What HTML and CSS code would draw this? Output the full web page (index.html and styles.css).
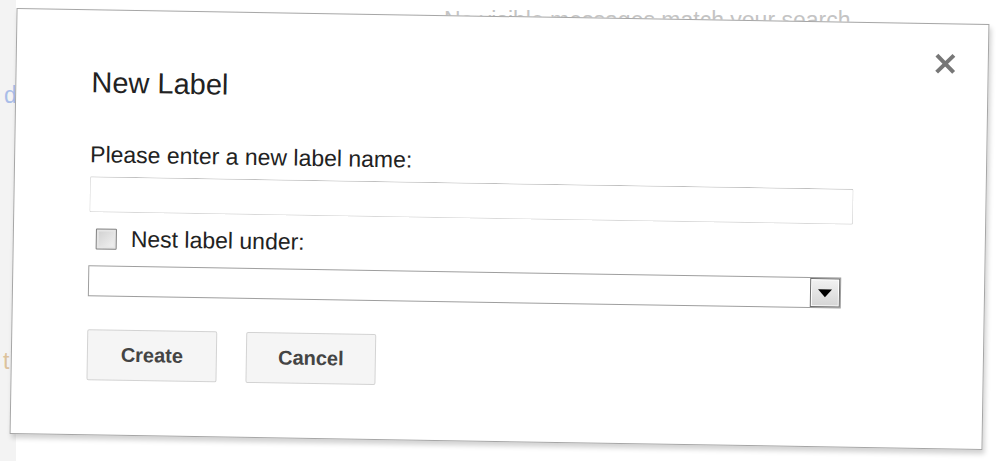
FILE: index.html
```html
<!DOCTYPE html>
<html lang="en">
<head>
  <meta charset="UTF-8" />
  <meta name="viewport" content="width=device-width, initial-scale=1.0"/>
  <title>New Label</title>
  <link rel="stylesheet" href="styles.css">
</head>
<body>

<div class="page">
  <div class="side">
    <span class="side-d">d</span>
    <span class="side-t">t</span>
  </div>
  <div class="main">
    <p class="empty-msg">No visible messages match your search.</p>
  </div>
</div>

<div id="labelDialog" class="dialog">
  <span class="close" title="Close">
    <svg width="21" height="21" viewBox="0 0 21 21">
      <path d="M2 2 L19 19 M19 2 L2 19" stroke="#777" stroke-width="4" fill="none"/>
    </svg>
  </span>
  <h2 class="title">New Label</h2>

  <label class="field-label" for="labelName">Please enter a new label name:</label>
  <input type="text" id="labelName" class="text-input">

  <div class="nest-row">
    <input type="checkbox" id="nest" class="nest-check">
    <label for="nest">Nest label under:</label>
  </div>

  <div class="select-box">
    <span class="select-arrow"></span>
  </div>

  <div class="buttons">
    <button id="createBtn">Create</button>
    <button id="cancelBtn">Cancel</button>
  </div>
</div>

</body>
</html>
```

FILE: styles.css
```css
body {
  font-family: "Liberation Sans", Arial, sans-serif;
  background: #fff;
  margin: 0;
  padding: 0;
  height: 461px;
  overflow: hidden;
  color: #222;
}

/* page behind the dialog */
.page {
  display: flex;
  height: 461px;
}

.side {
  width: 16px;
  background: #f3f3f3;
  display: flex;
  flex-direction: column;
  font-size: 23px;
  line-height: 26px;
}

.side-d {
  color: #a9bde8;
  margin-top: 82px;
  padding-left: 4px;
}

.side-t {
  color: #dcc29c;
  margin-top: 240px;
  padding-left: 3px;
}

.main {
  flex: 1;
}

.empty-msg {
  margin: 7px 0 0 428px;
  font-size: 23px;
  line-height: 26px;
  color: #c4c4c4;
}

/* dialog */
.dialog {
  position: absolute;
  left: 13px;
  top: 16px;
  width: 973px;
  height: 426px;
  box-sizing: border-box;
  padding: 56px 0 0 75px;
  background: #fff;
  border: 1px solid #a6a6a6;
  box-shadow: 2px 4px 5px rgba(0,0,0,0.18);
  transform: rotate(0.94deg);
}

.close {
  position: absolute;
  top: 29px;
  right: 32px;
  width: 21px;
  height: 21px;
  cursor: pointer;
}

.close svg {
  display: block;
}

.title {
  margin: 0;
  font-size: 29px;
  line-height: 33px;
  font-weight: normal;
  color: #222;
}

.field-label {
  display: block;
  margin-top: 42px;
  font-size: 23px;
  line-height: 26px;
}

.text-input {
  display: block;
  box-sizing: border-box;
  width: 764px;
  height: 36px;
  margin: 9px 0 0 0;
  padding: 0 8px;
  border: 1px solid #d9d9d9;
  border-top-color: #c0c0c0;
  border-radius: 2px;
  font-size: 20px;
}

.nest-row {
  display: flex;
  align-items: center;
  gap: 14px;
  height: 26px;
  margin-top: 13px;
  font-size: 23px;
  line-height: 26px;
}

.nest-check {
  appearance: none;
  -webkit-appearance: none;
  width: 21px;
  height: 21px;
  margin: 0 0 0 7px;
  border: 1px solid #7d7d7d;
  border-radius: 1px;
  background: linear-gradient(135deg, #cfcfcf, #f3f3f3);
  box-shadow: inset 0 0 0 2px #e6e6e6;
}

.select-box {
  display: flex;
  justify-content: flex-end;
  box-sizing: border-box;
  width: 753px;
  height: 31px;
  margin-top: 14px;
  border: 1px solid #9e9e9e;
  background: #fff;
}

.select-arrow {
  display: flex;
  align-items: center;
  justify-content: center;
  box-sizing: border-box;
  width: 30px;
  height: 100%;
  border: 1px solid #6e6e6e;
  box-shadow: inset 0 0 0 1px #fff;
  background: linear-gradient(#f2f2f2, #d5d5d5);
}

.select-arrow::after {
  content: "";
  border-left: 7px solid transparent;
  border-right: 7px solid transparent;
  border-top: 8px solid #000;
}

.buttons {
  display: flex;
  gap: 29px;
  margin-top: 33px;
}

button {
  width: 130px;
  height: 51px;
  padding: 0;
  background: #f5f5f5;
  border: 1px solid #d3d3d3;
  border-radius: 2px;
  font-family: "Liberation Sans", Arial, sans-serif;
  font-size: 20px;
  font-weight: bold;
  color: #444;
  cursor: pointer;
}
```
